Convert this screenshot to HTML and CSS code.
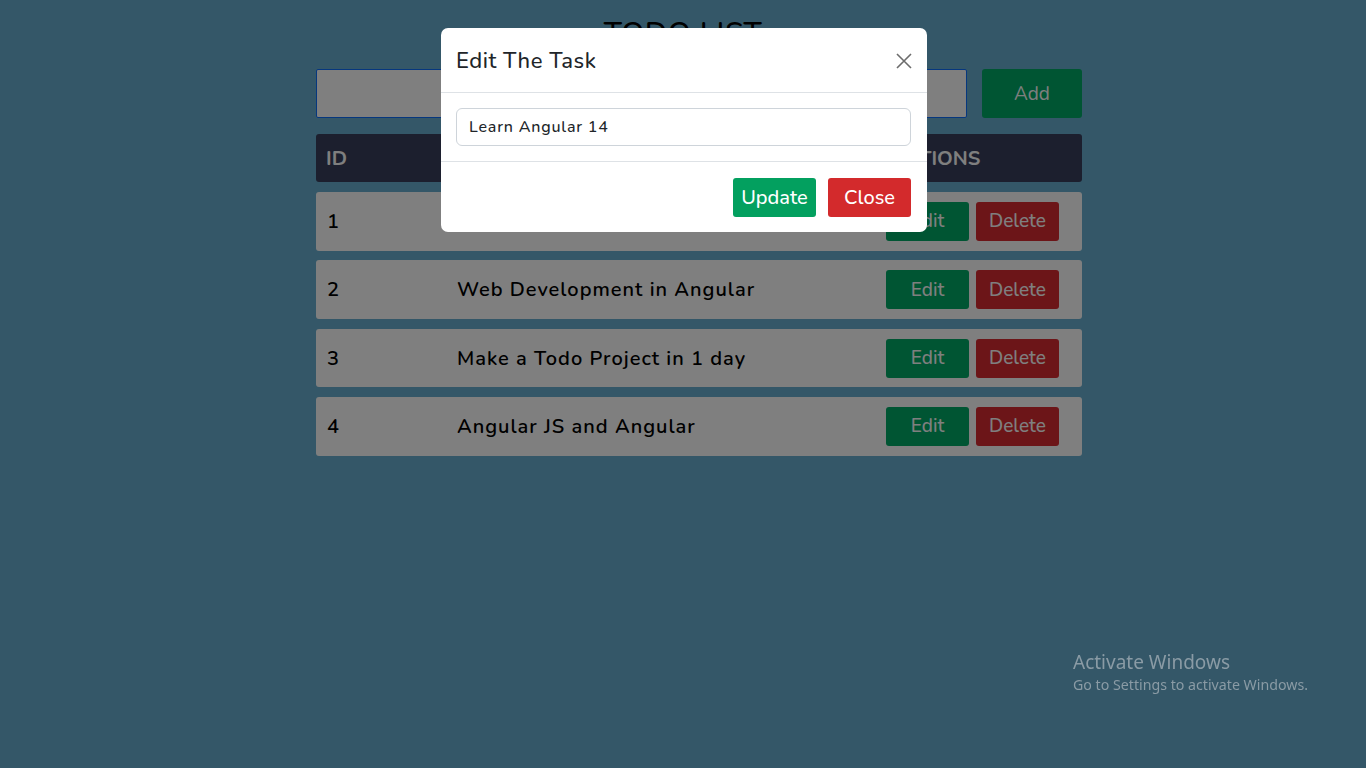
FILE: index.html
```html
<!DOCTYPE html>
<html lang="en">
<head>
<meta charset="utf-8">
<title>Todo List</title>
<link rel="stylesheet" href="styles.css">
</head>
<body>
<main class="page">
  <h1 class="title">TODO LIST</h1>
  <div class="wrap">
    <div class="add-row">
      <input class="add-input" type="text">
      <button class="btn btn-green add-btn">Add</button>
    </div>
    <div class="thead">
      <div class="c-id">ID</div>
      <div class="c-task">TASK</div>
      <div class="c-act">ACTIONS</div>
    </div>
    <div class="row">
      <div class="c-id">1</div>
      <div class="c-task">Learn Angular 14</div>
      <div class="c-act"><button class="btn btn-green">Edit</button><button class="btn btn-red">Delete</button></div>
    </div>
    <div class="row">
      <div class="c-id">2</div>
      <div class="c-task">Web Development in Angular</div>
      <div class="c-act"><button class="btn btn-green">Edit</button><button class="btn btn-red">Delete</button></div>
    </div>
    <div class="row">
      <div class="c-id">3</div>
      <div class="c-task">Make a Todo Project in 1 day</div>
      <div class="c-act"><button class="btn btn-green">Edit</button><button class="btn btn-red">Delete</button></div>
    </div>
    <div class="row">
      <div class="c-id">4</div>
      <div class="c-task">Angular JS and Angular</div>
      <div class="c-act"><button class="btn btn-green">Edit</button><button class="btn btn-red">Delete</button></div>
    </div>
  </div>
</main>
<div class="backdrop"></div>
<div class="modal">
  <div class="modal-head">
    <h2 class="modal-title">Edit The Task</h2>
    <button class="close-x" aria-label="Close">
      <svg width="16" height="16" viewBox="0 0 16 16"><path d="M1 1L15 15M15 1L1 15" stroke="#6c6c6c" stroke-width="1.6" fill="none"/></svg>
    </button>
  </div>
  <div class="modal-body">
    <input class="modal-input" type="text" value="Learn Angular 14">
  </div>
  <div class="modal-foot">
    <button class="btn mbtn m-green">Update</button>
    <button class="btn mbtn m-red">Close</button>
  </div>
</div>
<div class="activate">
  <div class="act-1">Activate Windows</div>
  <div class="act-2">Go to Settings to activate Windows.</div>
</div>
</body>
</html>
```
FILE: styles.css
```css
* { box-sizing: border-box; }
html, body { margin: 0; height: 100%; }
body {
  background: #68afd0;
  font-family: "Nunito", "Noto Sans", sans-serif;
  color: #000;
  overflow: hidden;
}
.page { padding-top: 14px; }
.title {
  margin: 0;
  text-align: center;
  font-size: 30px;
  font-weight: 500;
  line-height: 40px;
  letter-spacing: 0.5px;
}
.wrap {
  width: 766px;
  margin-left: 316px;
  margin-top: 15px;
}
.add-row { display: flex; gap: 15px; height: 49px; }
.add-input {
  flex: 1;
  border: 1px solid #0d6efd;
  background: #fff;
  border-radius: 2px;
}
.btn {
  border: none;
  border-radius: 3px;
  font-family: inherit;
  font-size: 19px;
  color: #fff;
  cursor: pointer;
  padding: 0;
}
.btn-green { background: #00aa66; }
.btn-red { background: #d82a30; }
.add-btn { width: 100px; }
.thead, .row {
  display: flex;
  align-items: center;
  border-radius: 3px;
}
.thead {
  margin-top: 16px;
  height: 48px;
  background: #383e5c;
  color: #fff;
  font-weight: 700;
  font-size: 20px;
}
.row {
  margin-top: 10px;
  height: 58.7px;
  background: #fff;
  font-size: 20px;
  font-weight: 600;
  letter-spacing: 1px;
}
.row + .row { margin-top: 9.65px; }
.c-id { width: 131px; padding-left: 10px; }
.row .c-id { padding-left: 11px; }
.c-task { width: 429px; padding-left: 10px; }
.c-act { display: flex; gap: 7px; padding-left: 10px; }
.thead .c-act { padding-left: 15px; }
.c-act .btn { width: 83px; height: 39px; letter-spacing: 0; font-weight: 500; }
.backdrop {
  position: fixed;
  inset: 0;
  background: rgba(0, 0, 0, 0.5);
}
.modal {
  position: fixed;
  left: 441px;
  top: 28px;
  width: 486px;
  background: #fff;
  border-radius: 7px;
}
.modal-head {
  display: flex;
  align-items: center;
  justify-content: space-between;
  height: 65px;
  padding: 1px 14px 0 15px;
  border-bottom: 1px solid #dee2e6;
}
.modal-title {
  margin: 0;
  font-size: 22px;
  font-weight: 500;
  color: #212529;
  letter-spacing: 0.5px;
}
.close-x {
  border: none;
  background: none;
  padding: 0;
  width: 16px;
  height: 16px;
  margin-right: 1px;
  display: flex;
}
.modal-body {
  padding: 15px 16px 15px 15px;
  border-bottom: 1px solid #dee2e6;
}
.modal-input {
  width: 100%;
  height: 38px;
  border: 1px solid #ced4da;
  border-radius: 6px;
  padding: 0 12px;
  font-family: inherit;
  font-size: 16px;
  font-weight: 500;
  letter-spacing: 0.8px;
  color: #212529;
}
.modal-foot {
  display: flex;
  justify-content: flex-end;
  gap: 12px;
  padding: 16px 16px 15px;
}
.mbtn { width: 83px; height: 39px; font-size: 20px; font-weight: 500; }
.m-green { background: #03a05f; }
.m-red { background: #d32a2c; }
.activate {
  position: fixed;
  left: 1073px;
  top: 650px;
  color: #8a9ba5;
  font-family: "Noto Sans", "Open Sans", sans-serif;
}
.act-1 { font-size: 19px; line-height: 24px; }
.act-2 { font-size: 14.2px; line-height: 22px; }
```
